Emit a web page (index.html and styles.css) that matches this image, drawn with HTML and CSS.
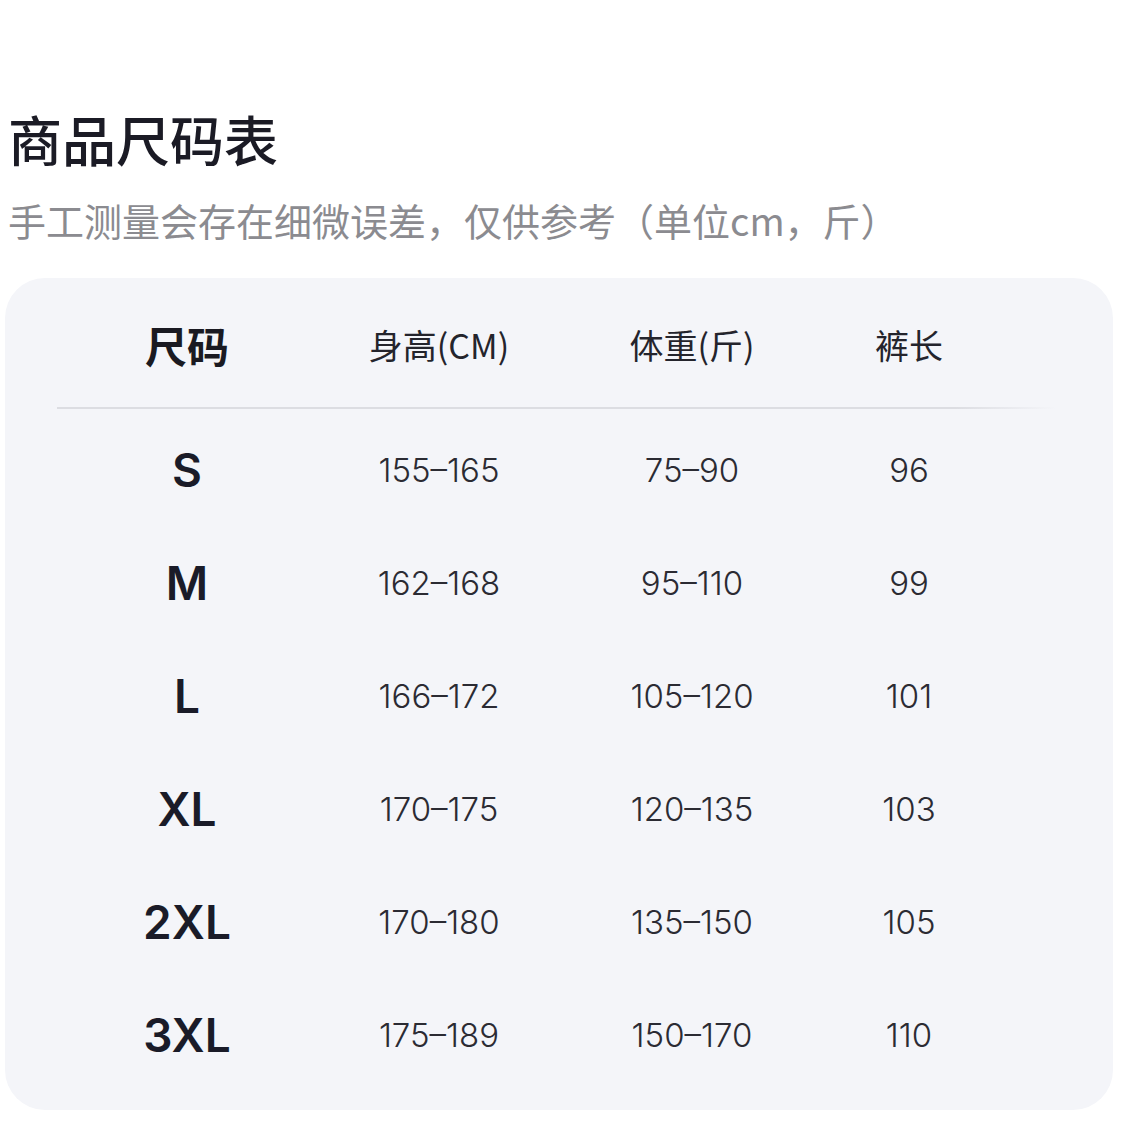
FILE: index.html
```html
<!DOCTYPE html>
<html lang="zh">
<head>
<meta charset="utf-8">
<title>商品尺码表</title>
<link rel="stylesheet" href="styles.css">
</head>
<body>
<div class="page">
  <h1 class="title">商品尺码表</h1>
  <p class="subtitle">手工测量会存在细微误差，仅供参考（单位cm，斤）</p>
  <div class="card">
    <div class="row head">
      <div class="cell size-h">尺码</div>
      <div class="cell">身高(CM)</div>
      <div class="cell">体重(斤)</div>
      <div class="cell">裤长</div>
    </div>
    <div class="divider"></div>
    <div class="row"><div class="cell size">S</div><div class="cell num">155–165</div><div class="cell num">75–90</div><div class="cell num">96</div></div>
    <div class="row"><div class="cell size">M</div><div class="cell num">162–168</div><div class="cell num">95–110</div><div class="cell num">99</div></div>
    <div class="row"><div class="cell size">L</div><div class="cell num">166–172</div><div class="cell num">105–120</div><div class="cell num">101</div></div>
    <div class="row"><div class="cell size">XL</div><div class="cell num">170–175</div><div class="cell num">120–135</div><div class="cell num">103</div></div>
    <div class="row"><div class="cell size">2XL</div><div class="cell num">170–180</div><div class="cell num">135–150</div><div class="cell num">105</div></div>
    <div class="row"><div class="cell size">3XL</div><div class="cell num">175–189</div><div class="cell num">150–170</div><div class="cell num">110</div></div>
  </div>
</div>
</body>
</html>
```
FILE: styles.css
```css
html, body {
  margin: 0;
  padding: 0;
  background: #ffffff;
}
body {
  font-family: "Inter", "Noto Sans CJK SC", sans-serif;
}
.page {
  padding-top: 112px;
}
.title {
  margin: 0 0 35px 8px;
  font-family: "Noto Sans CJK SC", sans-serif;
  font-size: 54px;
  line-height: 54px;
  font-weight: 500;
  color: #1b1b25;
}
.subtitle {
  margin: 0 0 39px 8px;
  font-family: "Noto Sans CJK SC", sans-serif;
  font-size: 38px;
  line-height: 38px;
  font-weight: 400;
  color: #8b8b90;
}
.card {
  margin-left: 5px;
  width: 1108px;
  box-sizing: border-box;
  padding: 3px 58px 19px 52px;
  background: #f4f5f9;
  border-radius: 40px;
}
.row {
  display: grid;
  grid-template-columns: 260px 244px 262px 172px;
  align-items: center;
  height: 113px;
}
.row.head {
  height: 126px;
}
.cell {
  text-align: center;
  color: #2b2b33;
}
.head .cell {
  font-family: "Noto Sans CJK SC", sans-serif;
  font-size: 34px;
  font-weight: 400;
  color: #24242c;
}
.head .size-h {
  font-size: 42px;
  font-weight: 700;
  color: #1a1a22;
}
.divider {
  height: 2px;
  margin-bottom: 4px;
  background: linear-gradient(to right, #dcdde2 0%, #dcdde2 90%, rgba(220, 221, 226, 0) 100%);
}
.size {
  font-size: 46px;
  font-weight: 600;
  color: #1a1b28;
}
.num {
  font-size: 33px;
  font-weight: 350;
}
```
